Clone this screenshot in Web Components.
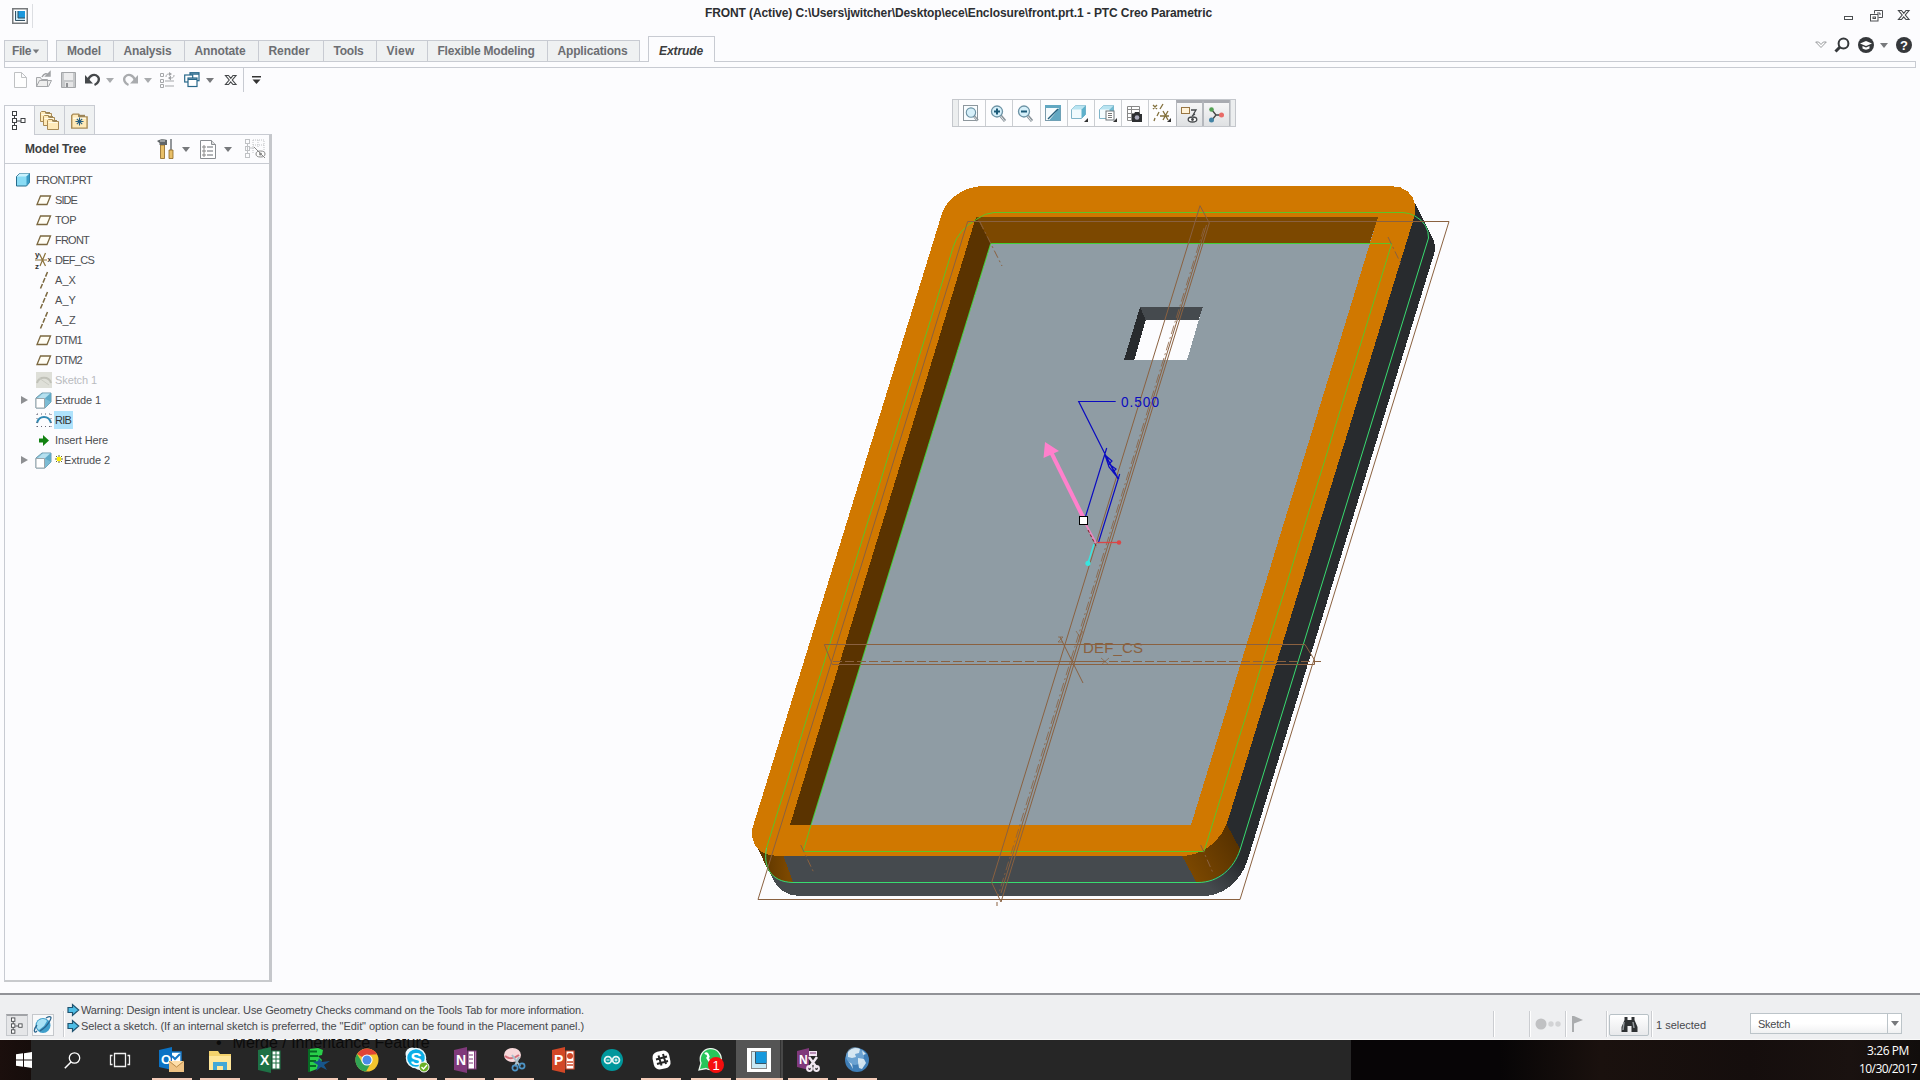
<!DOCTYPE html>
<html lang="en"><head><meta charset="utf-8"><title>PTC Creo Parametric</title>
<style>html,body{margin:0;padding:0;overflow:hidden;background:#fcfcfe}</style></head><body>
<creo-app></creo-app>
<script>
const define=(name,html,after)=>{const t=document.createElement('template');t.innerHTML=html;
 customElements.define(name,class extends HTMLElement{connectedCallback(){if(this.shadowRoot)return;
  this.attachShadow({mode:'open'}).append(t.content.cloneNode(true));after&&after.call(this,this.shadowRoot);}});};

/* text that spaces its letters to fill the width given in "w" */
define('ui-label','<style>:host{display:block;white-space:pre;line-height:16px}span{display:inline-block;transform-origin:0 50%}</style><span><slot></slot></span>',function(r){
 const w=+this.getAttribute('w'),s=r.querySelector('span');if(!w)return;
 const n=this.textContent.length,m=s.getBoundingClientRect().width;
 s.style.letterSpacing=((w-m)/n)+'px';});

const arrow=c=>`<path d="M0 0h8L4 5z" fill="${c}"/>`;
const folder=(x,y,k=1)=>`<g transform="translate(${x} ${y}) scale(${k})"><path d="M.5 11.5v-9l1-1h4l1 2h5v8z" fill="#ffeab8" stroke="#a98b55"/><path d="M5 2h5v1.500h-5z" fill="#9b8457"/><path d="M1.500 4.500h9" stroke="#fffbe8"/></g>`;
const cube=(a,b,c)=>`<path d="M1.500 5.500l4-4h10v9l-4 4h-10z" fill="${a}" stroke="#7fb4c8"/><path d="M1.500 5.500l4-4h10l-4 4z" fill="${b}"/><path d="M11.500 5.500l4-4v9l-4 4z" fill="${c}"/>`;
const lens=`<path d="M10 10l5 6" stroke="#8b949a" stroke-width="3"/><path d="M10.500 11l4 5" stroke="#dfe5e8"/><circle cx="7" cy="6.500" r="5.500" fill="#d6f0fa" stroke="#6d93a5" stroke-width="1.300"/>`;
const tile=(c,t)=>`<path d="M0 3l13-3v26l-13-3z" fill="${c}"/><path d="M14 4h8v18h-8z" fill="#fff" stroke="${c}" stroke-width="1.200"/><text x="2" y="18" font-size="14" font-weight="700" fill="#fff">${t}</text>`;
const globe=`<circle cx="12" cy="13" r="12" fill="#3f7eb7"/><circle cx="10" cy="9" r="9" fill="#82b5df" opacity=".65"/><path d="M3 5c3-4 8-5 12-3l-1 4-4 1 1 3-4 1-4-1zM13 11l6 1 2 4-4 6-3-1-1-6zM17 3l4 4-3 1zM4 15l3 2 1 5z" fill="#e9f3f8" opacity=".85"/>`;
const I={
 app:[16,16,`<rect x=".75" y=".75" width="14.500" height="14.500" fill="#fff" stroke="#777a7d" stroke-width="1.500"/><rect x="3" y="3" width="10" height="10" fill="#c5e9f7"/><rect x="6" y="3" width="7" height="7" fill="#1b98dd"/><path d="M3.500 3v9.500H13M6 3v7h7" fill="none" stroke="#345163"/>`],
 min:[10,5,`<rect x=".5" y=".5" width="8" height="3" fill="#fff" stroke="#4c4f52"/>`],
 restore:[13,12,`<path d="M4.500 3.500v-3h8v7h-4" fill="none" stroke="#4c4f52"/><rect x=".5" y="4.500" width="7.500" height="6.500" fill="#fff" stroke="#4c4f52"/><rect x="3" y="7" width="2.500" height="1.500" fill="none" stroke="#4c4f52"/><path d="M7 3h3v2" fill="none" stroke="#4c4f52"/>`],
 x:[12,11,`<path d="M.5.5h3l2.300 2.800L8 .5h3L7.300 5l3.700 4.500H8L5.700 6.800 3.500 9.500h-3L4.200 5z" fill="#fff" stroke="#45484b" stroke-width="1.150"/>`],
 chev:[12,8,`<path d="M.7 1h3L6 3.500 8.300 1h3L6 6.500z" fill="#fff" stroke="#8d9093" stroke-width=".9"/>`],
 find:[16,16,`<circle cx="9.500" cy="6.500" r="4.900" fill="none" stroke="#35383b" stroke-width="2"/><path d="M6 10l-4.500 4.500" stroke="#35383b" stroke-width="3"/>`],
 cap:[16,16,`<circle cx="8" cy="8" r="8" fill="#35383b"/><path d="M2 6.500L8 4l6 2.500L8 9zM4.500 9v2.500c2 1.500 5 1.500 7 0V9L8 10.500z" fill="#fff"/>`],
 help:[16,16,`<circle cx="8" cy="8" r="8" fill="#35383b"/><text x="4" y="12.500" font-size="13" font-weight="700" fill="#fff">?</text>`],
 dn:[8,5,arrow('#77797c')],dnl:[8,5,arrow('#a9abae')],
 dnbar:[9,9,`<path d="M0 .75h9" stroke="#333" stroke-width="1.500"/><path d="M.5 3.500h8L4.500 8z" fill="#333"/>`],
 new:[13,16,`<path d="M.5.5h7l5 5v10H.5zM7.500.5v5h5" fill="#fefefe" stroke="#bfc1c3"/>`],
 open:[16,16,`<path d="M.5 14.500v-9h4l1 2h6v7zM.5 14.500l3-6h12l-3 6z" fill="#eee" stroke="#a5a7aa"/><path d="M6 5c2-4 5-4 7-2M14 0v4h-4z" fill="none" stroke="#a0a2a5" stroke-width="1.500"/>`],
 save:[15,16,`<path d="M.5.5h14v15H.5z" fill="#c6c8ca" stroke="#a4a6a9"/><path d="M3 1h9v7H3z" fill="#ececed"/><path d="M4 10h8v5H4z" fill="#e5e5e6"/><path d="M5 11h2v4H5z" fill="#8f9194"/>`],
 undo:[16,14,`<path d="M3 7C5 1.500 10 .8 12.700 3.500c2.600 2.800.5 7-3.200 8.500" fill="none" stroke="#45484b" stroke-width="2.300"/><path d="M0 2v8.500h8z" fill="#45484b"/>`],
 redo:[16,14,`<path d="M13 7C11 1.500 6 .8 3.300 3.500c-2.600 2.800-.5 7 3.200 8.500" fill="none" stroke="#a9abae" stroke-width="2.300"/><path d="M16 2v8.500H8z" fill="#a9abae"/>`],
 regen:[15,16,`<g fill="none" stroke="#a5a7aa"><path d="M.5 1.500h3v3h-3zM.5 7.500h3v3h-3zM.5 12.500h3v3h-3zM5 9h9M5 14h9M6 5c0-3 2-3 4-3M14 3c0 3-2 3-4 3" /></g><path d="M9 0l3 2-3 2zM11 3.500v5L8 6z" fill="#a0a2a5"/>`],
 wins:[16,16,`<g fill="#fff" stroke="#28688a" stroke-width="1.200"><rect x="6" y=".7" width="9" height="8"/><rect x=".7" y="3" width="8" height="7"/><rect x="4" y="6" width="9" height="8.500"/></g><path d="M4 7.300h9M6 2h9" stroke="#28688a" stroke-width="1.500"/>`],
 tree:[14,20,`<g fill="#fff" stroke="#3e4144"><path d="M2.500 4v12M5 10h4" fill="none"/><rect x=".5" y=".5" width="4" height="4"/><rect x=".5" y="7.500" width="4" height="4"/><rect x=".5" y="14.500" width="4" height="4"/><rect x="9" y="7.500" width="4" height="4"/></g>`],
 folders:[20,20,folder(0,0)+folder(3,4)+folder(7,8)],
 fav:[18,17,folder(0,0,1.4)+`<path d="M8.500 5.500v8M4.500 9.500h8M5.800 6.800l5.400 5.400M11.200 6.800l-5.400 5.400" stroke="#285f82" stroke-width="1.100"/>`],
 hammer:[18,20,`<path d="M3.500 6h4v13.500h-4z" fill="#e8bf68" stroke="#8a6422" stroke-width=".8"/><path d="M0 2c3-2 7-2 10-1v5H2.500V4z" fill="#606568"/><path d="M3 2h5" stroke="#d4d8da"/><path d="M14 0v11" stroke="#777c80" stroke-width="1.600"/><path d="M12 11h4v8.500h-4z" fill="#e8bf68" stroke="#8a6422" stroke-width=".8"/>`],
 list:[16,19,`<path d="M.5.5h11l4 4v14H.5z" fill="#fff" stroke="#898d91"/><path d="M11.500.5v4h4" fill="#ddd" stroke="#898d91"/><path d="M7 7h6M7 11h6M7 15h6" stroke="#676b70"/><path d="M3 6h2v2H3zM3 10h2v2H3zM3 14h2v2H3z" fill="none" stroke="#888"/>`],
 treeoff:[21,20,`<g fill="none" stroke="#c0c2c5"><rect x=".5" y=".5" width="4" height="4"/><rect x=".5" y="7.500" width="4" height="4"/><rect x=".5" y="14.500" width="4" height="4"/><path d="M2.500 4v10M5 9h4"/><path d="M8 1h11v14M8 1v14M13 1v7M8 6h11" stroke-dasharray="1 1"/></g><ellipse cx="15.500" cy="15" rx="4.500" ry="3" fill="#fff" stroke="#888"/><circle cx="15.500" cy="15" r="1.500" fill="#888"/><path d="M9 8l11 11" stroke="#888"/>`],
 part:[14,14,`<path d="M.5 3.500l3-3h10v9l-3 3.500H.500z" fill="#8adcf5" stroke="#276c8c"/><path d="M.8 3.500l3-3h9.500l-3 3z" fill="#c9f2fd"/><path d="M10.500 3.500l3-3v9l-3 3z" fill="#3a9cc6"/>`],
 plane:[16,11,`<path d="M4.500 1h10l-3.500 8.500H1z" fill="#fffdf4" stroke="#7b6840" stroke-width="1.300"/>`],
 cs:[17,17,`<path d="M0 8h12M4.500 2l6 12M10.500 1L5 14" stroke="#8a7038" stroke-width="1.200"/><text x="0" y="5" font-size="8" font-weight="700" fill="#333">y</text><text x="0" y="16.500" font-size="8" font-weight="700" fill="#333">z</text><text x="12.500" y="10" font-size="7" font-weight="700" fill="#333">x</text>`],
 axis:[8,17,`<path d="M7.500 0L.5 16.500" stroke="#7b6840" stroke-width="1.500" stroke-dasharray="5 1.500"/>`],
 sketchoff:[16,16,`<rect width="16" height="16" fill="#dedfd8"/><path d="M1 11c2-7 12-7 14 0" fill="none" stroke="#c0c1b8" stroke-width="2"/><path d="M3 6l10 7" stroke="#cbccc4"/>`],
 sketch:[16,14,`<path d="M1 10c2-8 12-8 14 0" fill="none" stroke="#3289b3" stroke-width="2"/><path d="M1 1h14M1 13.500h14M1 1v13M15 1v13" stroke="#667" stroke-dasharray="1 3"/>`],
 extr:[17,17,`<path d="M1 6l6-5h9v9l-6 6H1z" fill="#8cc9e0" stroke="#6c99ab"/><path d="M1 6.500h8.500V16H1z" fill="#fff" stroke="#9aa5ab"/><path d="M10 6.500l6-5.500v9l-6 6z" fill="#7dbcd4"/><path d="M3 6l5-4.500h7L10 6z" fill="#b5e0ef"/><path d="M10 6.500L16 10V1z" fill="#5fa9c6"/>`],
 ins:[10,11,`<path d="M0 3.500h4V0l6 5.500L4 11V7.500H0z" fill="#138212"/>`],
 tri:[7,8,`<path d="M0 0v8l7-4z" fill="#8e9093"/>`],
 star:[8,8,`<path d="M4 0v8M0 4h8M1 1l6 6M7 1L1 7" stroke="#6a6a20" stroke-width="1"/><rect x="2" y="2" width="4" height="4" fill="#fff200"/>`],
 refit:[17,17,`<rect x=".5" y=".5" width="14" height="15" fill="#f9fdff" stroke="#8d979d"/><g transform="translate(2 2) scale(.85)">${lens}</g>`],
 zin:[17,17,lens+`<path d="M4 6.500h6M7 3.500v6" stroke="#1b5a78" stroke-width="2"/>`],
 zout:[17,17,lens+`<path d="M4 6.500h6" stroke="#1b5a78" stroke-width="2"/>`],
 repaint:[16,16,`<rect x=".5" y=".5" width="15" height="15" fill="#f5fbfd" stroke="#7b9aaa"/><path d="M0 0h16v3H0zM15.500 1v14.500H4l5-6z" fill="#62a8c2"/><path d="M3 14l10-10" stroke="#24607d" stroke-width="1.500"/>`],
 shade:[19,18,cube('#f0fafd','#b9e4f1','#5eb1cc')+`<path d="M18 14v4h-4z" fill="#333"/>`],
 views:[19,18,cube('#f4fcff','#b9e4f1','#72bbd2')+`<rect x="8" y="7" width="8" height="9" fill="#fff" stroke="#6f767a"/><path d="M10 9.500h4M10 11.500h4M10 13.500h4" stroke="#777"/><path d="M19 14v4h-4z" fill="#333"/>`],
 viewm:[17,17,`<path d="M1.500 1.500h12v14h-12zM1.500 4.500h12M1.500 8.500h12M1.500 12.500h12M5.500 1.500v14" fill="#fff" stroke="#888"/><path d="M6 9h2l1-2h4l1 2h2v8H6z" fill="#2d2f31"/><circle cx="11" cy="12.500" r="2.300" fill="#aab"/>`],
 datum:[19,18,`<path d="M1 1l4 4M5 1L1 5M11 0L8 5M7 8l-2 4M3 14l-1 3M8 12h9M11 7l5 9M16 7l-5 9" stroke="#82703c" stroke-width="1.300"/><path d="M19 14v4h-4z" fill="#333"/>`],
 annot:[17,17,`<rect x=".5" y="1.500" width="8" height="6" fill="#fff2d8" stroke="#987543"/><path d="M10 4h5l-3 5M14 8l-3 2" fill="none" stroke="#45484b" stroke-width="1.300"/><ellipse cx="11.500" cy="13.500" rx="4.300" ry="2.500" fill="#fff" stroke="#45484b" stroke-width="1.300"/><circle cx="11.500" cy="13.500" r="1.400" fill="#45484b"/>`],
 spin:[17,16,`<path d="M4 3l4 5-4 5M8 8h5" fill="none" stroke="#444" stroke-width="1.300"/><circle cx="3.500" cy="2.500" r="2.300" fill="#52a052"/><circle cx="13.500" cy="8" r="2.500" fill="#e96b67"/><circle cx="3.500" cy="13" r="2.500" fill="#4383a5"/>`],
 web:[18,18,`<circle cx="9" cy="9.500" r="7.500" fill="#3f9fcb"/><path d="M4 5c4-3 8-2 9 0l-3 5-5 4c-3-2-3-6-1-9z" fill="#a9e2f5"/><path d="M3 15C0 18-1 14 3 9M12 2c5-2.500 6-1 4 2.500-2 4-6 8-10 10.500" fill="none" stroke="#2a648c" stroke-width="1.300"/>`],
 msg:[11,12,`<path d="M0 3.500h4.500V.500L10.700 6 4.500 11.500V8.500H0z" fill="#4dbde6" stroke="#1f5370" stroke-width="1.200"/>`],
 dots:[26,12,`<circle cx="6" cy="6" r="5.500" fill="#c0c1c3"/><circle cx="16" cy="6" r="2.700" fill="#d2d3d5"/><circle cx="23" cy="6" r="2.700" fill="#d2d3d5"/>`],
 flag:[12,16,`<path d="M1 0v16" stroke="#999b9e" stroke-width="1.600"/><path d="M2 0l9 4-9 3.500z" fill="#aaacae"/>`],
 bino:[17,16,`<path d="M3.500 0h3v3h4V0h3v3l3 7v5h-6V9h-4v6h-6v-5l3-7z" fill="#2e3133"/><path d="M3 5l-1 8M12 5l1 6" stroke="#93999d" stroke-width="1.500"/>`],
 win:[16,16,`<path d="M0 2.300l7-1v6.300H0zM8 1.200L16 0v7.600H8zM0 8.500h7v6.300l-7-1zM8 8.500h8V16l-8-1.200z" fill="#fff"/>`],
 tsearch:[17,17,`<circle cx="10.500" cy="6" r="5.200" fill="none" stroke="#fff" stroke-width="1.300"/><path d="M7 10L.8 16.200" stroke="#fff" stroke-width="1.500"/>`],
 tview:[20,14,`<path d="M4.500.5h11v13h-11zM2.500 2.500h-2v9h2M17.500 2.500h2v9h-2" fill="none" stroke="#f2f2f2" stroke-width="1.300"/>`],
 outlook:[26,26,`<path d="M10 5h12v11H10z" fill="#fff" stroke="#1577c7" stroke-width="1.500"/><path d="M13 9l3 3 5-5" stroke="#1577c7" stroke-width="2" fill="none"/><path d="M0 3l13-3v23L0 20z" fill="#0b72c4"/><text x="2" y="16.500" font-size="13" font-weight="700" fill="#fff">O</text><path d="M10 14h15v11H10z" fill="#efc384"/><path d="M10 14l7.500 6 7.500-6" fill="#ffdfaa" stroke="#ba8a47"/>`],
 explorer:[22,20,`<path d="M0 1h9l2 3h11v16H0z" fill="#f4d26c"/><path d="M0 6h22v14H0z" fill="#ffe69a"/><path d="M4 20v-8h14v8h-4v-4H8v4z" fill="#41a7d7"/>`],
 excel:[23,26,tile('#1e7145','X')+`<path d="M14 8h8M14 12h8M14 16h8M18 4v18" stroke="#1e7145"/>`],
 green:[23,24,`<path d="M2 1l9-1 5 2-1 5-4 1 4 4-5 9-8 3z" fill="#29cf4a"/><path d="M2 1v23M3 3.500h7M3 8h8M3 13h6M3 18h6" stroke="#076a24" stroke-width="2"/><path d="M12 10l3 4 8-1-6 4 3 5-6-3-5 4 2-6-5-3 5-1z" fill="#17568c"/>`],
 chrome:[24,24,`<circle cx="12" cy="12" r="11.500" fill="#f2c42d"/><path d="M12 12L2.200 6A11.500 11.500 0 0 1 22 6.300L12 7z" fill="#df4436"/><path d="M12 12L7 14 2 6A11.500 11.500 0 0 0 11 23.500l4-7z" fill="#31a354"/><circle cx="12" cy="12" r="5.600" fill="#fff"/><circle cx="12" cy="12" r="4.500" fill="#4b8be8"/>`],
 skype:[25,26,`<circle cx="7" cy="7" r="6.500" fill="#eaf8fd"/><circle cx="15" cy="16" r="7" fill="#eaf8fd"/><circle cx="11" cy="11" r="9.500" fill="#0baee7" stroke="#eaf8fd" stroke-width="1.500"/><text x="5.500" y="17.500" font-size="17" font-weight="700" fill="#fff">S</text><circle cx="19" cy="20" r="5" fill="#6bb126" stroke="#fff"/><path d="M16.500 20l2 2 3.500-4" stroke="#fff" stroke-width="1.400" fill="none"/>`],
 onenote:[23,26,tile('#80397b','N')+`<path d="M15 8h4M15 12h4M15 16h4" stroke="#80397b"/><path d="M20.500 4v18" stroke="#80397b"/>`],
 snip:[21,24,`<ellipse cx="8.500" cy="7" rx="8.500" ry="7" fill="#f8d8da"/><path d="M1 8c5 4 10 2 14-1" stroke="#d46d78" fill="none" stroke-width="2"/><path d="M8 7l8 11M15 9l-4 9" stroke="#aac0cb" stroke-width="2"/><circle cx="11" cy="20" r="2.600" fill="none" stroke="#4d94c6" stroke-width="1.700"/><circle cx="18" cy="18" r="2.600" fill="none" stroke="#4d94c6" stroke-width="1.700"/>`],
 ppt:[23,26,tile('#d24726','P')+`<circle cx="18" cy="9" r="3" fill="#d24726"/><path d="M15 15h6M15 18h6" stroke="#d24726" stroke-width="1.500"/>`],
 ard:[22,22,`<circle cx="11" cy="11" r="11" fill="#00979c"/><circle cx="7" cy="11" r="3.400" fill="none" stroke="#e4f4f4" stroke-width="1.800"/><circle cx="15" cy="11" r="3.400" fill="none" stroke="#e4f4f4" stroke-width="1.800"/><path d="M5.500 11h3M13.500 11h3M15 9.500v3" stroke="#fff"/>`],
 slack:[19,20,`<rect x="1" y="1" width="17" height="18" rx="6" transform="rotate(-12 9.500 10)" fill="#fff"/><path d="M6.500 5.500l3 10M11 4l3 10M4 9.500l11-3M5 14l11-3" stroke="#262626" stroke-width="2"/>`],
 wa:[25,25,`<path d="M0 22l2-7A10.500 10.500 0 1 1 7 20.500z" fill="#27c55a" stroke="#eaf7ed" stroke-width="1.300"/><path d="M6 6c2-2 3 1 3.500 2.500l-1 1.500c1 2.500 3 4 5 5" stroke="#fff" stroke-width="2.300" fill="none"/><circle cx="17" cy="17" r="8" fill="#f50e0e"/><text x="13.500" y="22" font-size="13" fill="#fff">1</text>`],
 creo:[24,24,`<rect width="24" height="24" fill="#fff"/><rect x="4.500" y="3.500" width="15" height="17" fill="#c8e9f5" stroke="#888"/><rect x="9" y="4" width="10.500" height="11" fill="#1699dd"/><path d="M8.500 4v11.500H19" stroke="#35576a" fill="none"/>`],
 clip:[23,24,`<path d="M0 3l12-3v22L0 19z" fill="#80397b"/><text x="2" y="15.500" font-size="12" font-weight="700" fill="#fff">N</text><path d="M12 3h8v5h-8z" fill="#f1e3f1"/><path d="M13 5h6" stroke="#80397b"/><path d="M12 9l8 11M20 9l-8 11" stroke="#f1e8f1" stroke-width="2.500"/><circle cx="12.500" cy="20.500" r="2.400" fill="none" stroke="#f1e8f1" stroke-width="2"/><circle cx="19.500" cy="20.500" r="2.400" fill="none" stroke="#f1e8f1" stroke-width="2"/>`],
 globe:[24,26,globe]
};
customElements.define('ui-icon',class extends HTMLElement{connectedCallback(){
 const [w,h,b]=I[this.getAttribute('name')];
 this.attachShadow({mode:'open'}).innerHTML=`<style>:host{display:block;flex:none;width:${w}px;height:${h}px}svg{display:block;overflow:visible;font-family:"Liberation Sans",sans-serif}</style><svg width="${w}" height="${h}" viewBox="0 0 ${w} ${h}">${b}</svg>`;}});

/* horizontal run of icons, each "name@left edge" */
const run=(start,list)=>{let x=start;return list.map(([n,l])=>{const m=l-x;x=l+I[n][0];return `<ui-icon name="${n}" style="margin-left:${m}px"></ui-icon>`}).join('')};

define('title-bar',`<style>:host{display:flex;height:30px;align-items:flex-start;font:bold 12px "Liberation Sans",sans-serif;color:#2c2e31}
 .l{display:flex;padding-top:8px;width:705px}.sep{width:1px;height:24px;background:#dcdee2;margin:-4px 0 0 4px}ui-label{margin-top:5px;width:507px}.r{display:flex;margin-left:632px;padding-top:10px;gap:16px}</style>
 <div class="l"><ui-icon name="app" style="margin-left:12px"></ui-icon><div class="sep"></div></div>
 <ui-label w="507">FRONT (Active) C:\\Users\\jwitcher\\Desktop\\ece\\Enclosure\\front.prt.1 - PTC Creo Parametric</ui-label>
 <div class="r"><ui-icon name="min" style="margin-top:6px"></ui-icon><ui-icon name="restore" style="margin-right:-1px"></ui-icon><ui-icon name="x"></ui-icon></div>`);

const tabs=[['Model',57,11,34],['Analysis',71,10.5,48],['Annotate',74,10.5,51],['Render',65,10.5,41],['Tools',53,10.5,30],['View',51,10.5,28],['Flexible Modeling',120,10.5,97],['Applications',93,10.5,70]];
define('ribbon-bar',`<style>:host{display:block;height:38px;font:bold 12px "Liberation Sans",sans-serif;color:#6c6e72}
 .row{display:flex;height:31px;align-items:flex-end;margin:0 4px}
 .t{box-sizing:border-box;height:21px;border:1px solid #c8cbd2;border-bottom:0;border-right:0;background:#eff1f2}
 .t.file{width:44px;border-right:1px solid #c8cbd2;display:flex;padding:0 0 0 7px;margin-right:8px}.file ui-icon{margin:8px 0 0 1px;transform:scale(.8)}
 .t ui-label{margin-top:2px}
 .on{box-sizing:border-box;width:67px;height:26px;border:1px solid #c8cbd2;border-bottom:0;margin:0 0 -1px 8px;background:#fcfcfe;padding:6px 0 0 10px;font-style:italic;color:#3b3d40;position:relative}
 .tools{display:flex;margin-left:1101px;height:16px;margin-bottom:8px;align-items:center}.tools ui-icon:first-child{margin-top:-1px}
 .rail{height:5px;border:1px solid #c8cbd2;margin:0 4px}.end{border-right:1px solid #c8cbd2}</style>
 <div class="row"><div class="t file"><ui-label w="19">File</ui-label><ui-icon name="dn"></ui-icon></div>
 ${tabs.map((t,i)=>`<div class="t ${i==7?'end':''}" style="width:${t[1]}px;padding-left:${t[2]-1}px"><ui-label w="${t[3]}">${t[0]}</ui-label></div>`).join('')}
 <div class="on"><ui-label w="44">Extrude</ui-label></div>
 <div class="tools">${run(1816,[['chev',1815],['find',1834],['cap',1858],['dn',1880],['help',1896]])}</div></div>
 <div class="rail"></div>`);

define('quick-bar',`<style>:host{display:flex;height:24px;align-items:center}i{width:1px;height:24px;background:#c8cbd2;margin-left:6px}</style>
 ${run(0,[['new',14],['open',36],['save',61],['undo',85],['dnl',106],['redo',122],['dnl',144],['regen',160],['wins',184],['dn',206],['x',225]])}<i></i><ui-icon name="dnbar" style="margin-left:8px"></ui-icon>`);

define('tree-row',`<style>:host{display:flex;height:20px;align-items:center;color:#4c4e51;font:11px "Liberation Sans",sans-serif}.e{width:13px}.i{width:19px;display:flex;justify-content:center}.n{padding:0 0 0 2px;line-height:18px;display:flex;align-items:center}:host([sel]) .n{background:#aee2fb;padding:1px 2px 1px 1px;margin-left:1px;color:#333}:host([off]){color:#b9bbbe}</style>
 <div class="e"></div><div class="i"></div><div class="n"><slot></slot></div>`,function(r){
 if(this.hasAttribute('open'))r.querySelector('.e').innerHTML='<ui-icon name="tri"></ui-icon>';
 r.querySelector('.i').innerHTML=`<ui-icon name="${this.getAttribute('icon')}"></ui-icon>`;
 if(this.hasAttribute('root')){this.style.paddingLeft='8px';r.querySelector('.e').remove();r.querySelector('.i').style.width='20px';r.querySelector('.n').style.paddingLeft='3px'}
 else this.style.paddingLeft='16px';
 if(this.hasAttribute('star'))r.querySelector('.n').insertAdjacentHTML('afterbegin','<ui-icon name="star" style="margin-right:1px;margin-top:-3px"></ui-icon>');});
const rows=[['part','FRONT.PRT',56,'root'],['plane','SIDE',22],['plane','TOP',21],['plane','FRONT',34],['cs','DEF_CS',39],['axis','A_X',21],['axis','A_Y',21],['axis','A_Z',21],['plane','DTM1',27],['plane','DTM2',27],['sketchoff','Sketch 1',42,'off'],['extr','Extrude 1',46,'open'],['sketch','RIB',16,'sel'],['ins','Insert Here',53],['extr','Extrude 2',46,'open star']];
define('side-panel',`<style>:host{display:flex;flex-direction:column;width:268px;margin-left:4px;padding-top:13px;box-sizing:border-box;height:901px}
 .tabs{display:flex;height:29px;flex:none}.tab{box-sizing:border-box;border:1px solid #c8cbd2;border-bottom:0;height:29px;width:31px;margin-right:-1px;background:#eff1f2;display:flex;justify-content:center;align-items:center;padding-left:1px}.tab:first-child{background:#fcfcfe;height:30px;position:relative;padding:0 2px 0 0}
 .box{flex:1;margin-bottom:11px;border:1px solid #c8cbd2;border-right:3px solid #c5c7cb;border-bottom:2px solid #c8cacd}
 .head{height:28px;border-bottom:1px solid #c8cbd2;display:flex;align-items:center;font:bold 12px "Liberation Sans",sans-serif;color:#3d3f42}.head ui-label{width:61px;margin-left:20px}.list{padding-top:6px}</style>
 <div class="tabs"><div class="tab"><ui-icon name="tree"></ui-icon></div><div class="tab"><ui-icon name="folders"></ui-icon></div><div class="tab"><ui-icon name="fav"></ui-icon></div></div>
 <div class="box"><div class="head"><ui-label w="61">Model Tree</ui-label>${run(86,[['hammer',157],['dn',182],['list',200],['dn',224],['treeoff',245]])}</div>
 <div class="list">${rows.map(r=>`<tree-row icon="${r[0]}" ${r[3]||''}><ui-label w="${r[2]}">${r[1]}</ui-label></tree-row>`).join('')}</div></div>`);

define('view-tools',`<style>:host{display:flex;box-sizing:border-box;width:284px;height:28px;border:1px solid #c4c7cc;background:#eceeef;padding-left:5px}.b{box-sizing:border-box;width:27.2px;border-left:1px solid #cbced2;background:#fdfdfe;display:flex;align-items:center;justify-content:center;padding-right:2px}.b.on{background:linear-gradient(#f6f6f7,#dfe1e3);border:1px solid #b5b8bd;border-top:3px solid #a9abb1;border-bottom:0;padding:0}.e{border-left:1px solid #cbced2}</style>
 ${['refit','zin','zout','repaint','shade','views','viewm','datum','annot','spin'].map((n,i)=>`<div class="b ${i>7?'on':''}"><ui-icon name="${n}"></ui-icon></div>`).join('')}<div class="e"></div>`);

define('model-view',`<style>:host{display:block;position:relative;flex:1;height:901px}view-tools{position:absolute;left:680px;top:7px}svg{display:block;font-family:"Liberation Sans",sans-serif}</style>
<svg width="1648" height="901" viewBox="272 92 1648 901" fill="none">
<defs><linearGradient id="c1" x1="1212" x2="1240" y1="890" y2="862" gradientUnits="userSpaceOnUse"><stop stop-color="#454a4e"/><stop offset="1" stop-color="#282b2e"/></linearGradient>
<linearGradient id="c2" x1="1188" x2="1236" y1="870" y2="840" gradientUnits="userSpaceOnUse"><stop stop-color="#7c4800"/><stop offset="1" stop-color="#583200"/></linearGradient>
<linearGradient id="c3" x1="760" x2="788" y1="0" y2="0" gradientUnits="userSpaceOnUse"><stop stop-color="#5c3500"/><stop offset="1" stop-color="#7c4800"/></linearGradient></defs>
<g shape-rendering="crispEdges">
<path d="M1415 203L1433.500 240Q1436 247 1434 254L1247 862C1240 882 1222 896 1204 896L1180 850L1400 200Z" fill="url(#c1)"/>
<path d="M753 838L773.500 880C778 889 787 896 799 896H1205L1188 850Z" fill="#454a4e"/>
<path d="M753 838L766 866C770 878 780 882 793 882L782 852Z" fill="url(#c3)"/>
<path d="M1181 854L1196.500 882.500C1218 882 1234 868 1240 849L1226 823Z" fill="url(#c2)"/>
<path d="M985 186H1391C1405 186 1413 194 1415 204C1415.500 210 1415 215 1413 221L1228 820C1222 840 1203 856 1181 856H778C757 856 750 842 752.500 828L941.500 215C946 200 962 186 985 186Z" fill="#d07800"/>
<path d="M976 217H1378L1191 825H790Z" fill="#8f9ca4"/>
<path d="M976 217H1378L1369.500 243H990.700Z" fill="#7c4800"/><path d="M976 217L990.700 243L811 825H790Z" fill="#5a3300"/>
<path d="M1140 307H1202.700L1187 360H1124Z" fill="#fcfcfe"/><path d="M1140 307H1202.700L1198.700 320H1145.700Z" fill="#454a4e"/><path d="M1140 307L1145.700 320L1134.300 360H1124Z" fill="#282b2e"/>
</g>
<g stroke="#5cc428" stroke-width="1"><path d="M811 825L990.700 243.500H1369" stroke="#42cf38"/><path d="M1369 243.500H1391.700L1204 851.500H803L811 825" />
<path d="M766.500 848L953.300 246.700Q958 230 977 219Q985 213 994 212.500H1403Q1410 213 1415 216"/>
<path d="M1415 216Q1429 224 1428.500 238L1240 850C1234 868 1219 882.500 1198 882.500H793C770 882 763 866 766.500 848" stroke="#38dc70"/></g>
<g stroke="#8a6140" stroke-width="1"><path d="M967.700 221.500H1449L1240 899.500H758Z"/>
<path d="M1200 205.700L1209.300 223L1001 902L991.700 882.500Z"/><path d="M1206.500 225L1001 893"/><path d="M1204 228L998 896" stroke-dasharray="9 3 2 3" stroke-width=".8"/><path d="M997 902v4"/>
<path d="M824.300 644.500H1305L1314.500 660V664.500H832.300Z"/><path d="M833 661.500H1321" stroke-dasharray="9 3"/><path d="M1040 661.500H1105M1060 637L1083 683"/><path d="M1101 658l8 7M1109 658l-8 7M1076 631l4 6 3-6M1080 637v5M1058 637h5l-5 5h5" stroke-width=".7"/>
<path d="M980 222L1002 266M1388 237L1401 264M800.700 845L814 873M1200.700 845L1213 873" stroke-dasharray="8 3 2 3"/></g>
<g stroke="#0b0bc0" stroke-width="1.200"><path d="M1115.700 401.500H1078.700L1105 454L1118.300 478.700M1106.700 448L1085.700 516M1119.700 474L1098.300 543M1105 455l7 6-3 3 7 5-3 3 6 7M1105 455l13 24M1105 455l4 12 9 11"/></g>
<path d="M1084 521L1096 543" stroke="#e887bf" stroke-width="2"/><path d="M1088 530L1097 548" stroke="#802020" stroke-dasharray="3 2"/>
<path d="M1050 450L1083 517" stroke="#ff80cc" stroke-width="4"/><path d="M1045 442L1059 451L1043.500 458Z" fill="#ff80cc"/>
<path d="M1097 542.500h22" stroke="#dc4545" stroke-width="1.300"/><circle cx="1119" cy="542.500" r="2.200" fill="#dc4545"/>
<path d="M1094 544L1088 563" stroke="#38e5df" stroke-width="1.500"/><circle cx="1088" cy="563.300" r="2.600" fill="#38e5df"/>
<rect x="1079.500" y="516.500" width="8" height="8" fill="#fff" stroke="#000"/>
<text transform="translate(1121 407) scale(.88 1)" font-size="15.500" letter-spacing="1.1" fill="#0b0bc0">0.500</text>
<text x="1083" y="653" font-size="15" fill="#8a6140" textLength="60">DEF_CS</text>
</svg><view-tools></view-tools>`);

define('status-bar',`<style>:host{display:flex;box-sizing:border-box;height:47px;border-top:2px solid #919297;background:#eeeff1;border-bottom:1px solid #f8f8f8;font:11px "Liberation Sans",sans-serif;color:#46484c}
 .b{box-sizing:border-box;width:22px;height:22px;margin-top:19px;border:1px solid #c5c8cc;background:#f8f9fa;display:flex;align-items:center;justify-content:center}.b.on{background:#e5e6e8;border-top:2px solid #a1a3a7}
 .s{width:1px;height:26px;background:#cbcdd1;border-right:1px solid #fff;margin-top:16px}.m{margin:7px 0 0 3px;width:517px}.m div{display:flex;align-items:center;gap:2px;height:16px}
 .cell{display:flex;align-items:center;height:26px;margin-top:16px;padding-left:5px;box-sizing:border-box}
 .f{box-sizing:border-box;width:40px;height:22px;margin:19px 0 0 1px;border:1px solid #b8c1c6;border-radius:2px;background:linear-gradient(#fff,#e8e9eb);display:flex;align-items:center;justify-content:center}
 .c{box-sizing:border-box;width:152px;height:21px;margin:18px 0 0 44px;border:1px solid #bcc4c9;background:linear-gradient(#fff,#fff 50%,#f0f1f2);display:flex;align-items:center;padding-left:7px}.c i{margin-left:auto;border-left:1px solid #bcc4c9;height:19px;width:13px;display:flex;align-items:center;justify-content:center}</style>
 <div class="b on" style="margin-left:6px"><ui-icon name="tree" style="transform:scale(.85)"></ui-icon></div><div class="b" style="margin-left:4px"><ui-icon name="web"></ui-icon></div><div class="s" style="margin-left:9px"></div>
 <div class="m"><div><ui-icon name="msg"></ui-icon><ui-label w="503">Warning: Design intent is unclear. Use Geometry Checks command on the Tools Tab for more information.</ui-label></div>
 <div><ui-icon name="msg"></ui-icon><ui-label w="503">Select a sketch. (If an internal sketch is preferred, the "Edit" option can be found in the Placement panel.)</ui-label></div></div>
 <div class="s" style="margin-left:908px"></div><div class="s" style="margin-left:34px"></div><div class="cell" style="width:34px;padding-left:4px"><ui-icon name="dots"></ui-icon></div><div class="s"></div><div class="cell" style="width:39px"><ui-icon name="flag"></ui-icon></div><div class="s"></div>
 <div class="f"><ui-icon name="bino"></ui-icon></div><div class="s" style="margin-left:2px"></div><div class="cell" style="padding-left:3px;padding-top:1px"><ui-label w="50">1 selected</ui-label></div>
 <div class="c"><ui-label w="32">Sketch</ui-label><i><ui-icon name="dn"></ui-icon></i></div>`);

const apps=[['win',24],['tsearch',72],['tview',120],['outlook',172,1],['explorer',220,1],['excel',269],['green',318,1],['chrome',367,1],['skype',417,1],['onenote',465,1],['snip',514,1],['ppt',563],['ard',612],['slack',661,1],['wa',711,1],['creo',759,2],['clip',808,1],['globe',857,1]];
let tx=0;
define('task-bar',`<style>:host{display:flex;height:40px;position:relative;background:linear-gradient(90deg,#1b0f0d 0,#160d0b 31px,#262626 31px,#262626 1351px,#070506 1351px,#070506 1500px,#1a110e 1600px,#150e0d 1750px,#1a1210 1850px,#110d0c 100%)}
 .ghost{position:absolute;left:216px;top:-1px;height:12px;overflow:hidden;display:flex;align-items:flex-end;font:16px "Liberation Sans",sans-serif;color:#0b0b0b;gap:11px;line-height:16px}.ghost>*{margin-bottom:0}
 .a{box-sizing:border-box;position:relative;width:40px;height:40px;display:flex;align-items:center;justify-content:center;flex:none}.r{border-bottom:2px solid #f3cbb8;padding-top:2px}.act{width:47px;background:linear-gradient(90deg,#555 44px,#333 44px,#333 45px,#484848 45px)}
 .clock{margin-left:auto;width:64px;font:12px "Open Sans","Noto Sans",sans-serif;color:#fff;display:flex;flex-direction:column;align-items:center;gap:2px;padding-top:3px}</style>
 <div class="ghost"><span>•</span><ui-label w="197">Merge / Inheritance Feature</ui-label></div>
 ${apps.map(([n,c,k])=>{const w=k==2?47:40,l=c-w/2,m=l-tx;tx=l+w;return `<div class="a ${k?'r':''} ${k==2?'act':''}" style="margin-left:${m}px"><ui-icon name="${n}"></ui-icon></div>`}).join('')}
 <div class="clock"><ui-label w="42">3:26 PM</ui-label><ui-label w="58">10/30/2017</ui-label></div>`);

define('creo-app',`<style>:host{display:flex;flex-direction:column;width:1920px;height:1080px;background:#fcfcfe;overflow:hidden}.main{display:flex;height:901px}</style>
 <title-bar></title-bar><ribbon-bar></ribbon-bar><quick-bar></quick-bar><div class="main"><side-panel></side-panel><model-view></model-view></div><status-bar></status-bar><task-bar></task-bar>`);
</script></body></html>
